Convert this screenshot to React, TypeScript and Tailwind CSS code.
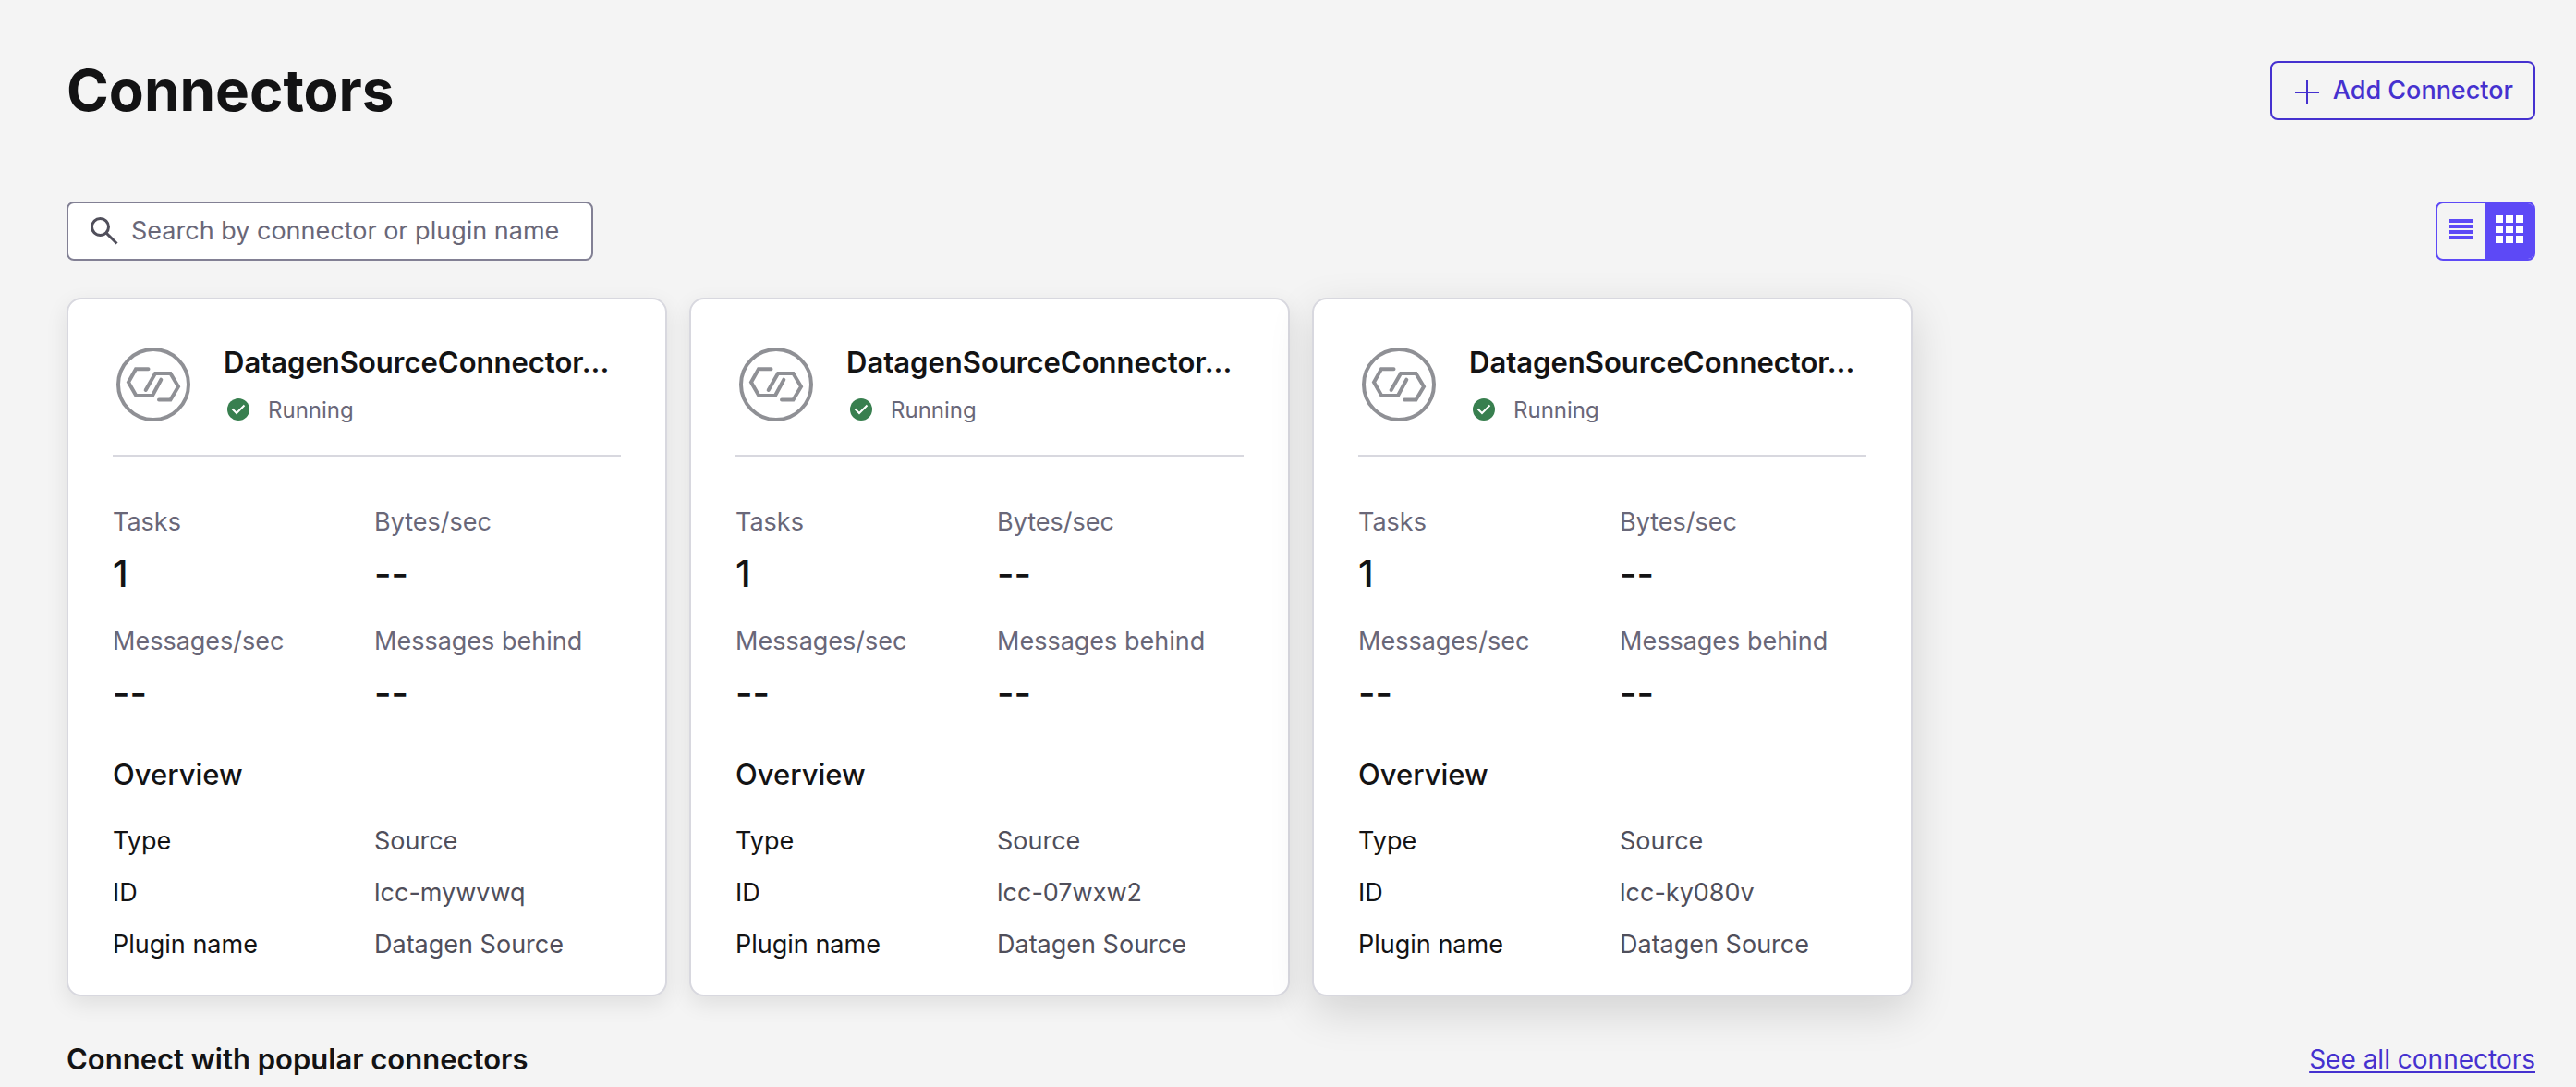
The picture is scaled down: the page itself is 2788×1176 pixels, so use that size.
const connectors = [
  { id: 'lcc-mywvwq', raised: false },
  { id: 'lcc-07wxw2', raised: false },
  { id: 'lcc-ky080v', raised: true },
];

const stats = [
  { label: 'Tasks', value: '1' },
  { label: 'Bytes/sec', value: '--' },
  { label: 'Messages/sec', value: '--' },
  { label: 'Messages behind', value: '--' },
];

function ConnectorLogo() {
  return (
    <svg viewBox="0 0 88 88" className="size-22 shrink-0" fill="none" stroke="#8f9095" strokeWidth="4" strokeLinecap="round" aria-hidden="true">
      <circle cx="44" cy="44" r="38" />
      <path d="M38.500 27.300H25L17 41.500L25.300 56H43L52.300 38.700" />
      <path d="M35.700 50L46 32H62.500L71 46.300L62.500 60.500H50" />
    </svg>
  );
}

function ConnectorCard({ id, raised }: { id: string; raised: boolean }) {
  const details = [
    ['Type', 'Source'],
    ['ID', id],
    ['Plugin name', 'Datagen Source'],
  ];
  return (
    <article
      className={
        raised
          ? 'min-w-0 rounded-2xl border-2 border-[#d8d8df] bg-white px-12 pt-12 pb-[34px] shadow-[0_16px_48px_rgba(0,0,0,0.14)]'
          : 'min-w-0 rounded-2xl border-2 border-[#d8d8df] bg-white px-12 pt-12 pb-[34px] shadow-[0_8px_24px_rgba(0,0,0,0.09)]'
      }
    >
      <header className="flex gap-8 border-b-2 border-[#d8d8df] pb-8">
        <ConnectorLogo />
        <div className="min-w-0 flex-1">
          <h2 className="truncate text-[31px] leading-10 font-semibold">DatagenSourceConnector...</h2>
          <p className="mt-4 flex items-center gap-4 text-2xl leading-8 text-[#696778]">
            <svg viewBox="0 0 32 32" className="size-8" fill="none" aria-hidden="true">
              <circle cx="16" cy="15" r="12" fill="#387f4f" />
              <path d="M9.500 14.500L14 19L22.500 10.500" stroke="white" strokeWidth="2" />
            </svg>
            Running
          </p>
        </div>
      </header>
      <dl className="grid grid-cols-2 gap-x-4 gap-y-[31px] pt-[53px]">
        {stats.map((s) => (
          <div key={s.label}>
            <dt className="text-[27px] leading-9 text-[#696778]">{s.label}</dt>
            <dd className="mt-3.5 text-[40px] leading-12 font-medium">{s.value}</dd>
          </div>
        ))}
      </dl>
      <h3 className="mt-11 text-[31px] leading-10 font-medium">Overview</h3>
      <dl className="mt-8 flex flex-col gap-4 text-[27px] leading-10">
        {details.map(([k, v]) => (
          <div key={k} className="grid grid-cols-2 gap-x-4">
            <dt>{k}</dt>
            <dd className="text-[#504f5b]">{v}</dd>
          </div>
        ))}
      </dl>
    </article>
  );
}

export default function App() {
  return (
    <main className="min-h-screen bg-[#f4f4f4] pt-[66px] pr-11 pl-18 font-['Inter',sans-serif] text-[#131314]">
      <header className="flex items-center justify-between">
        <h1 className="text-[62px] leading-16 font-bold">Connectors</h1>
        <button type="button" className="flex h-16 items-center gap-3 rounded-lg border-2 border-[#4531cf] px-[22px] text-[27px] font-medium text-[#4531cf]">
          <svg viewBox="0 0 32 32" className="size-8" fill="none" stroke="currentColor" strokeWidth="2" aria-hidden="true">
            <path d="M3 18H29M16 5V31" />
          </svg>
          Add Connector
        </button>
      </header>

      <div className="mt-22 flex items-center justify-between">
        <label className="flex h-16 w-[570px] items-center gap-3.5 rounded-lg border-2 border-[#828094] bg-white pr-3 pl-[22px]">
          <svg viewBox="0 0 32 32" className="size-8 shrink-0" fill="none" stroke="#504f5b" strokeWidth="3" aria-hidden="true">
            <circle cx="12.500" cy="11.500" r="9" />
            <path d="M19 18L30.500 29.500" />
          </svg>
          <input
            type="search"
            aria-label="Search connectors"
            placeholder="Search by connector or plugin name"
            className="min-w-0 flex-1 bg-transparent text-[27px] outline-none placeholder:text-[#696778]"
          />
        </label>
        <div className="flex h-16 w-27 overflow-hidden rounded-lg border-2 border-[#5d49f6]">
          <button type="button" aria-label="List view" className="flex flex-1 items-center justify-center text-[#5d49f6]">
            <svg viewBox="0 0 26 26" className="size-[26px]" fill="currentColor" aria-hidden="true">
              <path d="M0 0H26V4H0ZM0 6H26V10H0ZM0 12H26V16H0ZM0 18H26V22H0Z" />
            </svg>
          </button>
          <button type="button" aria-label="Grid view" aria-pressed="true" className="flex flex-1 items-center justify-center bg-[#5d49f6] text-white">
            <svg viewBox="0 0 30 34" className="h-[34px] w-[30px]" fill="currentColor" aria-hidden="true">
              <path d="M0 0H8V8H0ZM11 0H19V8H11ZM22 0H30V8H22ZM0 11H8V19H0ZM11 11H19V19H11ZM22 11H30V19H22ZM0 22H8V30H0ZM11 22H19V30H11ZM22 22H30V30H22Z" />
            </svg>
          </button>
        </div>
      </div>

      <section className="mt-10 grid grid-cols-4 gap-6">
        {connectors.map((c) => (
          <ConnectorCard key={c.id} {...c} />
        ))}
      </section>

      <footer className="mt-12 flex items-center justify-between">
        <h2 className="text-[31px] leading-10 font-semibold">Connect with popular connectors</h2>
        <a href="#connectors" className="text-[28px] leading-10 text-[#4531cf] underline decoration-2 underline-offset-3">
          See all connectors
        </a>
      </footer>
    </main>
  );
}
